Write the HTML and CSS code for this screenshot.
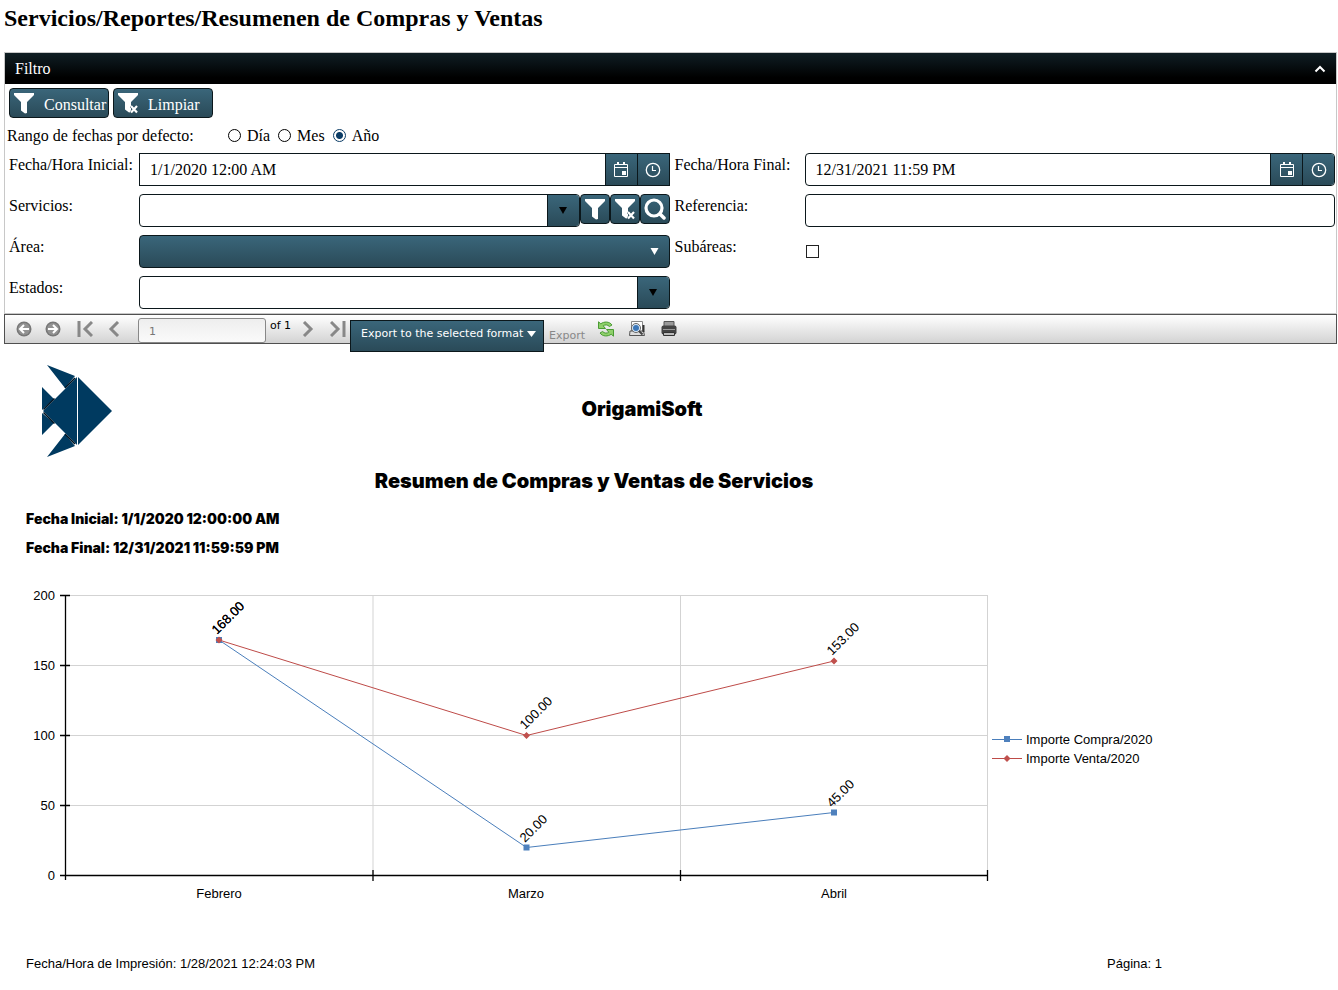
FILE: index.html
```html
<!DOCTYPE html>
<html lang="es">
<head>
<meta charset="utf-8">
<title>Resumen de Compras y Ventas</title>
<link rel="stylesheet" href="styles.css">
</head>
<body>
<svg class="defs" width="0" height="0" aria-hidden="true">
  <symbol id="funnel" viewBox="0 0 22 22"><path d="M1 1h20v2l-7 7v11l-2 .500-4-3V10L1 3z" fill="#fff"/></symbol>
  <symbol id="funnel-x" viewBox="0 0 22 22"><path d="M1 1h20v2l-7 7v10l-2 .500-4-3V10L1 3z" fill="#fff"/><path d="M14 14l6 6.500M20 14l-6 6.500" stroke="#2b4c59" stroke-width="3"/><path d="M14 14l6 6.500M20 14l-6 6.500" stroke="#fff" stroke-width="2.200"/></symbol>
  <symbol id="lens" viewBox="0 0 22 22"><circle cx="10" cy="10" r="8" fill="none" stroke="#fff" stroke-width="3.200"/><path d="M16 16l4 4" stroke="#fff" stroke-width="3.500" stroke-linecap="round"/></symbol>
  <symbol id="calendar" viewBox="0 0 16 16"><path d="M1.500 2.500h13v12h-13zM1.500 5.500h13" fill="none" stroke="#fff"/><path d="M4 0h2v3H4zM10 0h2v3h-2zM9 9h4v4H9z" fill="#fff"/></symbol>
  <symbol id="clock" viewBox="0 0 16 16"><circle cx="8" cy="8" r="6.700" fill="none" stroke="#fff" stroke-width="1.300"/><path d="M7.500 4v4.500H11" fill="none" stroke="#fff" stroke-width="1.200"/></symbol>
  <symbol id="arrow" viewBox="0 0 8 7"><path d="M0 0h8L4 7z" fill="currentColor"/></symbol>
</svg>

<h1 class="page-title">Servicios/Reportes/Resumenen de Compras y Ventas</h1>

<section class="panel">
  <header class="panel-head">
    <span>Filtro</span>
    <button class="collapse" type="button" aria-label="Contraer"><svg width="12" height="8" viewBox="0 0 12 8"><path d="M1.500 6.500L6 2l4.500 4.500" fill="none" stroke="#fff" stroke-width="2"/></svg></button>
  </header>
  <form class="filter">
    <div class="actions">
      <button class="action" type="button"><svg width="22" height="22"><use href="#funnel"/></svg><span>Consultar</span></button>
      <button class="action" type="button"><svg width="22" height="22"><use href="#funnel-x"/></svg><span>Limpiar</span></button>
    </div>
    <div class="range" role="radiogroup" aria-labelledby="range-label">
      <span class="range-label" id="range-label">Rango de fechas por defecto:</span>
      <label class="radio"><input type="radio" name="rango">Día</label>
      <label class="radio"><input type="radio" name="rango">Mes</label>
      <label class="radio"><input type="radio" name="rango" checked>Año</label>
    </div>
    <div class="fields">
      <div class="field">
        <label for="inicio">Fecha/Hora Inicial:</label>
        <div class="box square">
          <input id="inicio" type="text" value="1/1/2020 12:00 AM">
          <button type="button" aria-label="Calendario"><svg width="16" height="16"><use href="#calendar"/></svg></button>
          <button type="button" aria-label="Hora"><svg width="16" height="16"><use href="#clock"/></svg></button>
        </div>
      </div>
      <div class="field">
        <label for="final">Fecha/Hora Final:</label>
        <div class="box">
          <input id="final" type="text" value="12/31/2021 11:59 PM">
          <button type="button" aria-label="Calendario"><svg width="16" height="16"><use href="#calendar"/></svg></button>
          <button type="button" aria-label="Hora"><svg width="16" height="16"><use href="#clock"/></svg></button>
        </div>
      </div>
      <div class="field">
        <label for="servicios">Servicios:</label>
        <div class="with-tools">
          <div class="box">
            <input id="servicios" type="text">
            <button class="dark" type="button" aria-label="Abrir servicios"><svg width="8" height="7"><use href="#arrow"/></svg></button>
          </div>
          <button class="tool" type="button" aria-label="Filtrar"><svg width="22" height="22"><use href="#funnel"/></svg></button>
          <button class="tool" type="button" aria-label="Quitar filtro"><svg width="22" height="22"><use href="#funnel-x"/></svg></button>
          <button class="tool" type="button" aria-label="Buscar"><svg width="22" height="22"><use href="#lens"/></svg></button>
        </div>
      </div>
      <div class="field">
        <label for="referencia">Referencia:</label>
        <div class="box"><input id="referencia" type="text"></div>
      </div>
      <div class="field">
        <label for="area">Área:</label>
        <div class="picker area">
          <select id="area"><option></option></select>
          <svg width="9" height="7"><use href="#arrow"/></svg>
        </div>
      </div>
      <div class="field">
        <label for="subareas">Subáreas:</label>
        <input class="check" id="subareas" type="checkbox">
      </div>
      <div class="field">
        <label for="estados">Estados:</label>
        <div class="box">
          <input id="estados" type="text">
          <button class="dark" type="button" aria-label="Abrir estados"><svg width="8" height="7"><use href="#arrow"/></svg></button>
        </div>
      </div>
    </div>
  </form>
</section>

<div class="toolbar" role="toolbar" aria-label="Informe">
  <button class="tb" type="button" aria-label="Atrás"><svg width="16" height="16" viewBox="0 0 16 16"><circle cx="8" cy="8" r="7.500" fill="#777"/><circle cx="8" cy="8" r="6" fill="#929292"/><path d="M13 8H4M8 4L4 8l4 4" fill="none" stroke="#fff" stroke-width="2"/></svg></button>
  <button class="tb" type="button" aria-label="Adelante"><svg width="16" height="16" viewBox="0 0 16 16"><circle cx="8" cy="8" r="7.500" fill="#777"/><circle cx="8" cy="8" r="6" fill="#929292"/><path d="M3 8h9M8 4l4 4-4 4" fill="none" stroke="#fff" stroke-width="2"/></svg></button>
  <button class="tb first" type="button" aria-label="Primera página"><svg width="16" height="16" viewBox="0 0 16 16"><path d="M2 0v16M15 1L8 8l7 7" fill="none" stroke="#888" stroke-width="3"/></svg></button>
  <button class="tb prev" type="button" aria-label="Página anterior"><svg width="12" height="16" viewBox="0 0 12 16"><path d="M10 1L3 8l7 7" fill="none" stroke="#888" stroke-width="3"/></svg></button>
  <input class="page-no" type="text" value="1" aria-label="Página">
  <span class="page-of">of 1</span>
  <button class="tb" type="button" aria-label="Página siguiente"><svg width="12" height="16" viewBox="0 0 12 16"><path d="M2 1l7 7-7 7" fill="none" stroke="#888" stroke-width="3"/></svg></button>
  <button class="tb last" type="button" aria-label="Última página"><svg width="16" height="16" viewBox="0 0 16 16"><path d="M14 0v16M1 1l7 7-7 7" fill="none" stroke="#888" stroke-width="3"/></svg></button>
  <div class="picker export">
    <select aria-label="Formato"><option>Export to the selected format</option></select>
    <svg width="9" height="6" viewBox="0 0 8 7" preserveAspectRatio="none"><use href="#arrow"/></svg>
  </div>
  <a class="export-link">Export</a>
  <button class="tb refresh" type="button" aria-label="Actualizar"><svg width="18" height="16" viewBox="0 0 18 16"><path d="M1.500 7.500V.8l2.300 2C7 .3 12.500.3 15 4l-2.600 1.500C10.500 3.500 8 3.500 6.200 4.800l2.300 2.700z" fill="#8fd06b" stroke="#4a9b34"/><path d="M16.500 8.500v6.700l-2.300-2C11 15.700 5.500 15.700 3 12l2.600-1.500c1.900 2 4.400 2 6.200.7L9.500 8.500z" fill="#8fd06b" stroke="#4a9b34"/></svg></button>
  <button class="tb" type="button" aria-label="Vista previa"><svg width="16" height="16" viewBox="0 0 16 16"><path d="M2.500.5h11v12h-11z" fill="#fff" stroke="#888"/><path d="M1 10h13.500l1 4.500H.5z" fill="#ddd" stroke="#555"/><path d="M14.500 4v7" stroke="#333" stroke-width="2"/><circle cx="7" cy="7" r="4.500" fill="#dcebfa" stroke="#666"/><circle cx="7" cy="7" r="3" fill="#3c77b8"/><path d="M10 10l3.500 3.500" stroke="#444" stroke-width="2"/></svg></button>
  <button class="tb" type="button" aria-label="Imprimir"><svg width="16" height="16" viewBox="0 0 16 16"><path d="M3 6V.5h10V6" fill="#999" stroke="#555"/><rect x=".5" y="4.500" width="15" height="9" rx="2" fill="#444"/><path d="M2 8.500h12" stroke="#999"/><path d="M2.500 11.500h11v3h-11z" fill="#bbb" stroke="#333"/></svg></button>
</div>

<main class="report">
  <header class="report-head">
    <svg class="logo" width="71" height="92" viewBox="0 0 71 92"><g fill="#003a60"><path d="M5 0l28 11-10 12zM5 92l28-11-10-12zM0 22l12 12L0 45zM0 70l12-12L0 48zM1 46L35 12v68zM36 12l34 34-34 34z"/></g><path d="M1.500 44.500l11-11M1.500 47.500l11 11M23 23l10-10M23 69l10 10" stroke="#001525" stroke-width="1.500"/></svg>
    <h2 class="company">OrigamiSoft</h2>
  </header>
  <h2 class="report-title">Resumen de Compras y Ventas de Servicios</h2>
  <p class="date">Fecha Inicial: 1/1/2020 12:00:00 AM</p>
  <p class="date">Fecha Final: 12/31/2021 11:59:59 PM</p>
  <div class="chart-row">
    <svg class="chart" width="966" height="320" viewBox="26 585 966 320" role="img" aria-label="Importes de compra y venta por mes">
      <path d="M66 595.500h922M66 665.500h922M66 735.500h922M66 805.500h922M373 595v280M680.500 595v280M987.500 595v280" fill="none" stroke="#d3d3d3"/>
      <path d="M65.500 595v285M60 875.500h928M60 595.500h10M60 665.500h10M60 735.500h10M60 805.500h10M373 870v11M680.500 870v11M987.500 870v11" fill="none" stroke="#000" stroke-width="1.300"/>
      <path d="M219 640L526.500 847.500 834 812.500" fill="none" stroke="#4a7ebb"/>
      <path d="M219 640L526.500 735.500 834 661" fill="none" stroke="#be4b48"/>
      <path d="M216 637h6v6h-6zM523.500 844.500h6v6h-6zM831 809.500h6v6h-6z" fill="#4f81bd"/>
      <path d="M219 636.500l3.500 3.500-3.500 3.500-3.500-3.500zM526.500 732l3.500 3.500-3.500 3.500-3.500-3.500zM834 657.500l3.500 3.500-3.500 3.500-3.500-3.500z" fill="#c0504d"/>
      <g class="axis end"><text x="55" y="600">200</text><text x="55" y="670">150</text><text x="55" y="740">100</text><text x="55" y="810">50</text><text x="55" y="880">0</text></g>
      <g class="axis mid"><text x="219" y="898">Febrero</text><text x="526" y="898">Marzo</text><text x="834" y="898">Abril</text></g>
      <g class="axis">
        <text transform="translate(217 635) rotate(-45)">168.00</text>
        <text transform="translate(217 635) rotate(-45)">168.00</text>
        <text transform="translate(525 730) rotate(-45)">100.00</text>
        <text transform="translate(525 843) rotate(-45)">20.00</text>
        <text transform="translate(832 656) rotate(-45)">153.00</text>
        <text transform="translate(832 808) rotate(-45)">45.00</text>
      </g>
    </svg>
    <ul class="legend">
      <li><svg width="30" height="8" viewBox="0 0 30 8"><path d="M0 3.500h30" stroke="#4a7ebb"/><path d="M12 0h6v6h-6z" fill="#4f81bd"/></svg>Importe Compra/2020</li>
      <li><svg width="30" height="8" viewBox="0 0 30 8"><path d="M0 3.500h30" stroke="#be4b48"/><path d="M15 0l3.500 3.500L15 7l-3.500-3.500z" fill="#c0504d"/></svg>Importe Venta/2020</li>
    </ul>
  </div>
  <footer class="report-foot"><span>Fecha/Hora de Impresión: 1/28/2021 12:24:03 PM</span><span>Página: 1</span></footer>
</main>
</body>
</html>
```
FILE: styles.css
```css
* { box-sizing: border-box; }
body { margin: 0 1px 0 4px; background: #fff; color: #000; font: 16px/18px "Liberation Serif", serif; }
button, input, select { margin: 0; font: inherit; }
button { display: flex; align-items: center; justify-content: center; padding: 0; border: 0; background: none; color: #fff; flex-shrink: 0; }
svg { display: block; flex-shrink: 0; }
.defs { position: absolute; }
.page-title { margin: 0; padding: 4px 0 20px; font-size: 24px; line-height: 28px; }

.panel { border: 1px solid #c8c8c8; }
.panel-head { display: flex; align-items: center; justify-content: space-between; height: 31px; padding: 0 10px; background: linear-gradient(#0f1e24, #000 80%); color: #fff; }
.filter { padding: 4px 1px 4px 4px; }
.actions { display: flex; gap: 4px; }
.action { justify-content: flex-start; width: 100px; height: 30px; padding-left: 3px; border: 1px solid #0b171b; border-radius: 4px; background: linear-gradient(#3a667a, #2a4a58); }
.action span { padding: 3px 0 0 9px; }
.range { display: flex; align-items: center; height: 35px; gap: 7px; }
.range-label { width: 213px; margin-left: -2px; }
.radio { display: flex; align-items: center; gap: 5px; }
.radio input { appearance: none; width: 13px; height: 13px; border: 1px solid #000; border-radius: 50%; margin: 0 1px; }
.radio input:checked { border-color: #0b3c66; background: radial-gradient(#0b3c66 0 3px, #fff 4px); }

.fields { display: grid; grid-template-columns: 1fr 1fr; gap: 8px 5px; }
.field { display: flex; min-width: 0; height: 33px; }
.field > label { width: 130px; flex-shrink: 0; padding-top: 3px; }
.box { display: flex; flex: 1; min-width: 0; height: 33px; border: 1px solid #0b171b; border-radius: 4px; overflow: hidden; background: #fff; }
.square { border-radius: 0; }
.box input { flex: 1; min-width: 0; padding: 0 10px; border: 0; background: none; }
.box button { width: 32px; border-left: 1px solid #0b171b; background: linear-gradient(#3a667a, #2a4a58); }
.box .dark { color: #000; }
.with-tools { display: flex; flex: 1; min-width: 0; }
.tool { width: 30px; height: 30px; border: 1px solid #0b171b; border-radius: 4px; background: linear-gradient(#3a667a, #2a4a58); }
.picker { position: relative; color: #fff; }
.picker select { display: block; width: 100%; height: 100%; padding: 0 10px; appearance: none; border: 1px solid #0b171b; background: linear-gradient(#3a667a, #2a4a58); color: #fff; }
.picker svg { position: absolute; right: 11px; top: 50%; margin-top: -4px; pointer-events: none; }
.area { flex: 1; }
.area select { border-radius: 4px; }
.check { appearance: none; width: 13px; height: 13px; margin: 10px 1px; border: 1px solid #222; background: #fff; }

.toolbar { display: flex; align-items: flex-start; height: 30px; padding-left: 11px; border: 1px solid #505050; background: linear-gradient(#fff, #d3d3d3); font: 11px/14px "DejaVu Sans", sans-serif; }
.tb { height: 28px; margin-right: 13px; }
.first { margin-left: 3px; }
.prev { margin: 0 18px 0 2px; }
.page-no { width: 128px; height: 25px; margin: 3px 4px 0 0; padding: 2px 10px 0; border: 1px solid #888; border-radius: 3px; background: linear-gradient(#eee, #fafafa); color: #777; }
.page-of { margin: 4px 11px 0 0; }
.last { margin: 0 4px 0 3px; }
.export { width: 194px; height: 32px; margin-top: 5px; }
.export select { padding: 0 0 5px 10px; }
.export svg { right: 8px; margin-top: -5px; }
.export-link { margin: 14px 12px 0 5px; color: #888; }
.refresh { margin-right: 14px; }
.refresh ~ .tb { margin-right: 16px; }

.report { max-width: 1158px; padding: 21px 0 0 22px; font: 13px/16px "Liberation Sans", Arial, sans-serif; }
.report-head { display: flex; padding-left: 16px; }
.company, .report-title { margin: 0; font: 900 20px/24px Inter, "Liberation Sans", sans-serif; text-align: center; }
.company { flex: 1; padding: 32px 0 0 9px; }
.report-title { padding: 12px 0 18px; }
.date { margin: 0; font: 900 14px/16px Inter, "Liberation Sans", sans-serif; padding-bottom: 13px; }
.chart-row { display: flex; padding-top: 16px; }
.chart { overflow: visible; }
.axis { font-size: 13px; }
.end { text-anchor: end; }
.mid { text-anchor: middle; }
.legend { margin: 0; padding: 145px 0 0; list-style: none; white-space: nowrap; }
.legend li { display: flex; align-items: center; gap: 4px; height: 19px; }
.report-foot { display: flex; justify-content: space-between; padding-top: 51px; }
```
